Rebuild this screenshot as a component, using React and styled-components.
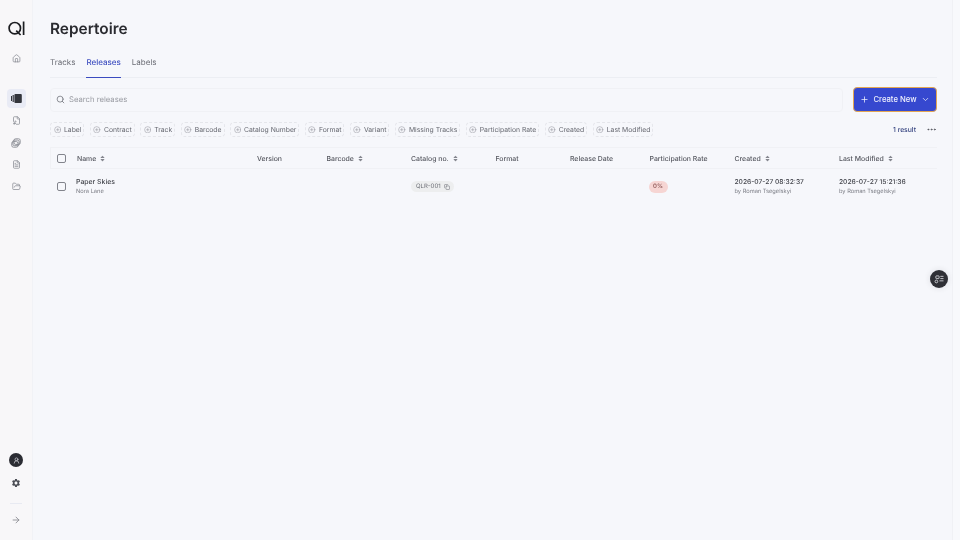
import React from "react";
import styled, { createGlobalStyle } from "styled-components";
import {
  ArrowRight,
  ChevronDown,
  CirclePlus,
  Copy,
  Ellipsis,
  FileText,
  FolderOpen,
  Home,
  Plus,
  Search,
  UserRound,
  FileMusic,
} from "lucide-react";
import { MdSettings } from "react-icons/md";
import { FaSort } from "react-icons/fa";

const GlobalStyle = createGlobalStyle`
  html, body {
    margin: 0;
    padding: 0;
    background: #f6f7fb;
    font-family: "Inter", "Liberation Sans", sans-serif;
    text-rendering: geometricPrecision;
  }
`;

const FILTERS = [
  "Label",
  "Contract",
  "Track",
  "Barcode",
  "Catalog Number",
  "Format",
  "Variant",
  "Missing Tracks",
  "Participation Rate",
  "Created",
  "Last Modified",
];

const COLUMNS = [
  { title: "Name", width: 180, sort: true },
  { title: "Version", width: 69.5 },
  { title: "Barcode", width: 84.5, sort: true },
  { title: "Catalog no.", width: 84.5, sort: true },
  { title: "Format", width: 74.5 },
  { title: "Release Date", width: 79.5 },
  { title: "Participation Rate", width: 85 },
  { title: "Created", width: 104.5, sort: true },
  { title: "Last Modified", width: 98, sort: true },
];

const LogoMark = () => (
  <svg width="17" height="15" viewBox="0 0 17 15" fill="none" stroke="#1c1d21" strokeWidth="1.7">
    <circle cx="6.8" cy="7.2" r="5.7" />
    <path d="M8.2 9.6 L12.6 14" />
    <path d="M15.6 0.5 V14" />
  </svg>
);

const SleeveIcon = () => (
  <svg width="11" height="9" viewBox="0 0 11 9" fill="#33353c">
    <rect x="3.4" y="0" width="7.4" height="9" rx="1" />
    <rect x="1.6" y="1" width="1.2" height="7" />
    <rect x="0" y="2" width="1" height="5" />
  </svg>
);

const StackIcon = () => (
  <svg width="10" height="10" viewBox="0 0 10 10" fill="none" stroke="currentColor" strokeWidth="0.9">
    <rect x="3" y="0.8" width="6.2" height="5.6" rx="1.6" />
    <rect x="1.9" y="2.1" width="6.2" height="5.6" rx="1.6" />
    <rect x="0.8" y="3.6" width="6.2" height="5.6" rx="1.6" />
  </svg>
);

const NotesIcon = () => (
  <svg width="10" height="9" viewBox="0 0 11 10" fill="none" stroke="currentColor" strokeWidth="0.9">
    <rect x="2" y="1" width="3.6" height="3" rx="0.6" />
    <path d="M7 1.5 H10.5 M7 4 H10.5 M6 6.5 H10.5" />
    <circle cx="2.6" cy="7.2" r="1.5" />
  </svg>
);

const SortMark = () => <FaSort size={7} color="#85878f" />;

const App = () => {
  return (
    <Page>
      <GlobalStyle />
      <Sidebar>
        <Logo>
          <LogoMark />
        </Logo>
        <NavIcon $top={10}>
          <Home size={9} />
        </NavIcon>
        <NavActive>
          <SleeveIcon />
        </NavActive>
        <NavIcon $top={3}>
          <FileMusic size={9} />
        </NavIcon>
        <NavIcon $top={3}>
          <StackIcon />
        </NavIcon>
        <NavIcon $top={3}>
          <FileText size={9} />
        </NavIcon>
        <NavIcon $top={3}>
          <FolderOpen size={9} />
        </NavIcon>
        <SidebarBottom>
          <Avatar>
            <UserRound size={7} strokeWidth={2.4} />
          </Avatar>
          <SettingsIcon>
            <MdSettings size={10} />
          </SettingsIcon>
          <Divider />
          <Expand>
            <ArrowRight size={10} />
          </Expand>
        </SidebarBottom>
      </Sidebar>
      <Main>
        <Title>Repertoire</Title>
        <Tabs>
          <Tab>Tracks</Tab>
          <Tab $active>Releases</Tab>
          <Tab>Labels</Tab>
        </Tabs>
        <SearchRow>
          <SearchBox>
            <Search size={9} color="#6b6e76" />
            <span>Search releases</span>
          </SearchBox>
          <CreateButton>
            <Plus size={9} />
            <span>Create New</span>
            <ChevronDown size={9} />
          </CreateButton>
        </SearchRow>
        <FilterRow>
          <Chips>
            {FILTERS.map((f) => (
              <Chip key={f}>
                <CirclePlus size={7.5} strokeWidth={1.3} color="#7b7d85" />
                {f}
              </Chip>
            ))}
          </Chips>
          <Result>1 result</Result>
          <More>
            <Ellipsis size={11} />
          </More>
        </FilterRow>
        <Table>
          <HeadRow>
            <CheckCell>
              <Check />
            </CheckCell>
            {COLUMNS.map((c) => (
              <HeadCell key={c.title} $width={c.width}>
                {c.title}
                {c.sort && <SortMark />}
              </HeadCell>
            ))}
          </HeadRow>
          <BodyRow>
            <CheckCell>
              <Check />
            </CheckCell>
            <NameCell $width={180}>
              <Primary>Paper Skies</Primary>
              <Secondary>Nora Lane</Secondary>
            </NameCell>
            <BodyCell $width={69.5} />
            <BodyCell $width={84.5} />
            <BodyCell $width={84.5}>
              <CatalogPill>
                QLR-001
                <Copy size={6} />
              </CatalogPill>
            </BodyCell>
            <BodyCell $width={74.5} />
            <BodyCell $width={79.5} />
            <BodyCell $width={85}>
              <RatePill>0%</RatePill>
            </BodyCell>
            <BodyCell $width={104.5}>
              <DateText>2026-07-27 08:32:37</DateText>
              <Secondary>by Roman Tsegelskyi</Secondary>
            </BodyCell>
            <BodyCell $width={98}>
              <DateText>2026-07-27 15:21:36</DateText>
              <Secondary>by Roman Tsegelskyi</Secondary>
            </BodyCell>
          </BodyRow>
        </Table>
      </Main>
      <RightStrip />
      <FloatButton>
        <NotesIcon />
      </FloatButton>
    </Page>
  );
};

const Page = styled.div`
  position: relative;
  display: flex;
  width: 960px;
  height: 540px;
  overflow: hidden;
  background: #f6f7fb;
`;

const Sidebar = styled.aside`
  display: flex;
  flex-direction: column;
  align-items: center;
  flex: 0 0 33px;
  height: 540px;
  padding-top: 17px;
  box-sizing: border-box;
  background: #f8f7f9;
  border-right: 1px solid #f1f2f6;
`;

const Logo = styled.div`
  display: flex;
  align-items: center;
  justify-content: center;
  height: 22px;
`;

const NavIcon = styled.div`
  display: flex;
  align-items: center;
  justify-content: center;
  width: 19px;
  height: 19px;
  margin-top: ${(p) => p.$top}px;
  color: #8a8c94;
`;

const NavActive = styled.div`
  display: flex;
  align-items: center;
  justify-content: center;
  width: 19px;
  height: 19px;
  margin-top: 21px;
  border-radius: 4px;
  background: #e9ebf5;
`;

const SidebarBottom = styled.div`
  display: flex;
  flex-direction: column;
  align-items: center;
  margin-top: auto;
  padding-bottom: 15px;
`;

const Avatar = styled.div`
  display: flex;
  align-items: center;
  justify-content: center;
  width: 14px;
  height: 14px;
  border-radius: 50%;
  background: #2b2c33;
  color: #d5d6dc;
`;

const SettingsIcon = styled.div`
  display: flex;
  margin-top: 11px;
  color: #4b4d55;
`;

const Divider = styled.div`
  width: 12px;
  height: 1px;
  margin-top: 15px;
  background: #e8eaf2;
`;

const Expand = styled.div`
  display: flex;
  margin-top: 11px;
  color: #85878e;
`;

const Main = styled.main`
  flex: 0 0 887px;
  margin-left: 17px;
  padding-top: 18px;
  will-change: transform;
`;

const Title = styled.h1`
  margin: 0;
  font-size: 15.4px;
  line-height: 22px;
  font-weight: 600;
  color: #2a2b30;
`;

const Tabs = styled.nav`
  display: flex;
  gap: 11px;
  height: 38px;
  box-sizing: border-box;
  padding-top: 14px;
  border-bottom: 1px solid #eceef3;
`;

const Tab = styled.div`
  height: 24px;
  box-sizing: border-box;
  padding-top: 2px;
  font-size: 8px;
  line-height: 12px;
  font-weight: ${(p) => (p.$active ? 500 : 400)};
  color: ${(p) => (p.$active ? "#3f4fc0" : "#6b6d75")};
  border-bottom: ${(p) => (p.$active ? "1px solid #3b4bc0" : "none")};
`;

const SearchRow = styled.div`
  display: flex;
  align-items: center;
  justify-content: space-between;
  margin-top: 9px;
`;

const SearchBox = styled.div`
  display: flex;
  align-items: center;
  gap: 4px;
  width: 793px;
  height: 24px;
  box-sizing: border-box;
  padding-left: 5px;
  border: 1px solid #f0f1f5;
  border-radius: 4px;
  font-size: 7.7px;
  color: #9a9ca3;
`;

const CreateButton = styled.button`
  display: flex;
  align-items: center;
  justify-content: center;
  gap: 4.5px;
  width: 84px;
  height: 25px;
  padding: 0;
  border: 1.5px solid #e3a653;
  border-radius: 4px;
  background: #3648cf;
  font-family: inherit;
  font-size: 7.7px;
  font-weight: 500;
  color: #eef0fd;
`;

const FilterRow = styled.div`
  display: flex;
  align-items: center;
  margin-top: 10px;
`;

const Chips = styled.div`
  display: flex;
  gap: 5.5px;
  flex: 1;
`;

const Chip = styled.div`
  display: flex;
  align-items: center;
  gap: 3px;
  height: 15px;
  box-sizing: border-box;
  padding: 0 2px 0 2.5px;
  border: 1px dashed #e5e6eb;
  border-radius: 4px;
  font-size: 6.8px;
  white-space: nowrap;
  color: #65676f;
`;

const Result = styled.div`
  font-size: 6.8px;
  font-weight: 500;
  color: #34427f;
`;

const More = styled.div`
  display: flex;
  margin-left: 10px;
  color: #55575f;
`;

const Table = styled.div`
  margin-top: 10px;
`;

const HeadRow = styled.div`
  display: flex;
  align-items: center;
  height: 22px;
  box-sizing: border-box;
  border: 1px solid #f0f1f5;
  border-right: none;
`;

const CheckCell = styled.div`
  display: flex;
  align-items: center;
  flex: 0 0 26px;
  padding-left: 6px;
  box-sizing: border-box;
`;

const Check = styled.div`
  width: 9px;
  height: 9px;
  box-sizing: border-box;
  border: 1px solid #82848c;
  border-radius: 2px;
`;

const HeadCell = styled.div`
  display: flex;
  align-items: center;
  gap: 3px;
  flex: 0 0 ${(p) => p.$width}px;
  font-size: 6.9px;
  font-weight: 500;
  white-space: nowrap;
  color: #55575f;
`;

const BodyRow = styled.div`
  display: flex;
  align-items: center;
  height: 35px;
  padding-left: 1px;
`;

const BodyCell = styled.div`
  display: flex;
  flex-direction: column;
  align-items: flex-start;
  flex: 0 0 ${(p) => p.$width}px;
`;

const NameCell = styled(BodyCell)`
  margin-left: -1px;
  margin-right: 1px;
`;

const Primary = styled.div`
  font-size: 6.9px;
  line-height: 10px;
  font-weight: 500;
  color: #42444b;
`;

const Secondary = styled.div`
  margin-top: 1px;
  font-size: 5.7px;
  line-height: 8px;
  white-space: nowrap;
  color: #7b7d85;
`;

const DateText = styled.div`
  font-size: 6.7px;
  line-height: 10px;
  font-weight: 500;
  white-space: nowrap;
  color: #42444b;
`;

const CatalogPill = styled.div`
  display: inline-flex;
  align-items: center;
  gap: 3px;
  height: 11px;
  padding: 0 4px 0 5px;
  border-radius: 6px;
  background: #edeeef;
  font-size: 6px;
  color: #6b6d75;
`;

const RatePill = styled.div`
  display: inline-flex;
  align-items: center;
  justify-content: center;
  width: 19px;
  height: 12px;
  margin-left: -1px;
  border-radius: 6px;
  background: #f6d5d3;
  font-size: 6px;
  font-weight: 500;
  color: #87504e;
`;

const RightStrip = styled.div`
  position: absolute;
  top: 0;
  right: 0;
  width: 8px;
  height: 540px;
  box-sizing: border-box;
  background: #f8f9fc;
  border-left: 1px solid #f0f1f5;
`;

const FloatButton = styled.div`
  position: absolute;
  top: 270px;
  left: 930px;
  display: flex;
  align-items: center;
  justify-content: center;
  width: 18px;
  height: 18px;
  border-radius: 50%;
  background: #2f3036;
  box-shadow: 0 0 6px rgba(40, 40, 50, 0.12);
  color: #e4e5ea;
`;

export default App;
